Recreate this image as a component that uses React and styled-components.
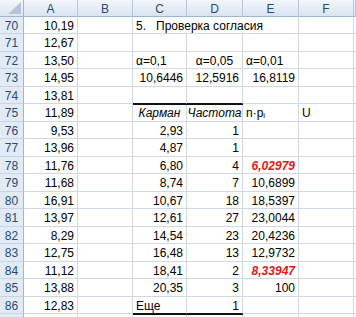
import React from "react";
import styled, { createGlobalStyle } from "styled-components";

const GlobalStyle = createGlobalStyle`
  html, body {
    margin: 0;
    padding: 0;
    background: #ffffff;
    overflow: hidden;
  }
  body {
    font-family: "Liberation Sans", Arial, sans-serif;
  }
`;

const COLUMNS = ["A", "B", "C", "D", "E", "F"];
const FIRST_ROW = 70;
const LAST_ROW = 86;

// column A holds the raw sample
const sample = [
  "10,19", "12,67", "13,50", "14,95", "13,81", "11,89", "9,53", "13,96",
  "11,76", "11,68", "16,91", "13,97", "8,29", "12,75", "11,12", "13,88", "12,83",
];

const R = (text, extra = {}) => ({ text, align: "right", ...extra });
const L = (text, extra = {}) => ({ text, align: "left", ...extra });

const table = {
  70: { C: L("5.\u00a0\u00a0\u00a0Проверка согласия", { span: 3 }) },
  72: { C: L("α=0,1"), D: { text: "α=0,05", align: "center" }, E: L("α=0,01") },
  73: { C: R("10,6446"), D: R("12,5916"), E: R("16,8119") },
  74: { C: L("", { thick: true }), D: L("", { thick: true }) },
  75: {
    C: { text: "Карман", align: "center", italic: true },
    D: { text: "Частота", align: "center", italic: true },
    E: L("npi"),
    F: L("U"),
  },
  76: { C: R("2,93"), D: R("1") },
  77: { C: R("4,87"), D: R("1") },
  78: { C: R("6,80"), D: R("4"), E: R("6,02979", { red: true }) },
  79: { C: R("8,74"), D: R("7"), E: R("10,6899") },
  80: { C: R("10,67"), D: R("18"), E: R("18,5397") },
  81: { C: R("12,61"), D: R("27"), E: R("23,0044") },
  82: { C: R("14,54"), D: R("23"), E: R("20,4236") },
  83: { C: R("16,48"), D: R("13"), E: R("12,9732") },
  84: { C: R("18,41"), D: R("2"), E: R("8,33947", { red: true }) },
  85: { C: R("20,35"), D: R("3"), E: R("100") },
  86: { C: L("Еще", { thick: true }), D: R("1", { thick: true }) },
};

// one extra row peeks in at the bottom edge
const rowNumbers = Array.from({ length: 18 }, (_, i) => FIRST_ROW + i);
const rowHeights = rowNumbers.map((_, i) => (i % 2 === 0 ? 17 : 18));

const Sheet = styled.div`
  display: grid;
  grid-template-columns: 24px 54px 55px 54px 56px 56px 55px 1fr;
  grid-template-rows: 17px ${(p) => p.$rows};
  width: 356px;
  height: 317px;
  overflow: hidden;
  font-size: 12px;
  color: #000000;
`;

const Corner = styled.div`
  position: relative;
  background: linear-gradient(#f3f6fb, #dbe5f2);
  border-right: 1px solid #9eb6ce;
  border-bottom: 1px solid #9eb6ce;
  box-sizing: border-box;
`;

const CornerMark = styled.svg`
  position: absolute;
  right: 2px;
  bottom: 2px;
`;

const ColHeader = styled.div`
  display: flex;
  align-items: center;
  justify-content: center;
  background: linear-gradient(#f3f6fb 0%, #e4ecf6 55%, #d9e3f0 100%);
  border-right: 1px solid #b5c7db;
  border-bottom: 1px solid #9eb6ce;
  box-sizing: border-box;
  color: #2b4a6e;
  font-size: 12px;
  padding-top: 1px;
`;

const RowHeader = styled.div`
  display: flex;
  align-items: center;
  justify-content: center;
  background: #e2eaf6;
  border-right: 1px solid #9eb6ce;
  border-bottom: 1px solid #c6d4e6;
  box-sizing: border-box;
  color: #2b4a6e;
  font-size: 12px;
  padding-top: 1px;
`;

const Cell = styled.div`
  position: relative;
  display: flex;
  align-items: center;
  justify-content: ${(p) =>
    p.$align === "right" ? "flex-end" : p.$align === "center" ? "center" : "flex-start"};
  grid-column: span ${(p) => p.$span || 1};
  padding: 1px 3px 0 3px;
  box-sizing: border-box;
  border-right: 1px solid #d0d7e5;
  border-bottom: 1px solid ${(p) => (p.$thick ? "#111111" : "#d0d7e5")};
  box-shadow: ${(p) => (p.$thick ? "0 1px 0 #111111" : "none")};
  z-index: ${(p) => (p.$thick ? 1 : 0)};
  white-space: nowrap;
  font-style: ${(p) => (p.$italic || p.$red ? "italic" : "normal")};
  font-weight: ${(p) => (p.$red ? "bold" : "normal")};
  color: ${(p) => (p.$red ? "#e1161d" : "#000000")};
`;

const Filler = styled.div`
  border-bottom: 1px solid #d0d7e5;
  box-sizing: border-box;
`;

const Sub = styled.span`
  font-size: 8px;
  position: relative;
  top: 2px;
`;

const renderText = (text) =>
  text === "npi" ? (
    <>
      n·p<Sub>i</Sub>
    </>
  ) : (
    text
  );

export default function App() {
  return (
    <>
      <GlobalStyle />
      <Sheet $rows={rowHeights.map((h) => `${h}px`).join(" ")}>
        <Corner>
          <CornerMark width="13" height="12" viewBox="0 0 13 12">
            <polygon points="13,0 13,12 0,12" fill="#b3c3d8" />
          </CornerMark>
        </Corner>
        {COLUMNS.map((c) => (
          <ColHeader key={c}>{c}</ColHeader>
        ))}
        <ColHeader />

        {rowNumbers.map((n, i) => {
          const row = table[n] || {};
          const cells = [];
          let skip = 0;
          COLUMNS.forEach((col) => {
            if (skip > 0) {
              skip -= 1;
              return;
            }
            const data =
              col === "A"
                ? { text: sample[i] || "", align: "right" }
                : row[col] || { text: "" };
            if (data.span) skip = data.span - 1;
            cells.push(
              <Cell
                key={col}
                $align={data.align}
                $span={data.span}
                $thick={data.thick}
                $italic={data.italic}
                $red={data.red}
              >
                {renderText(data.text)}
              </Cell>
            );
          });
          return (
            <React.Fragment key={n}>
              <RowHeader>{n <= LAST_ROW ? n : ""}</RowHeader>
              {cells}
              <Filler />
            </React.Fragment>
          );
        })}
      </Sheet>
    </>
  );
}
